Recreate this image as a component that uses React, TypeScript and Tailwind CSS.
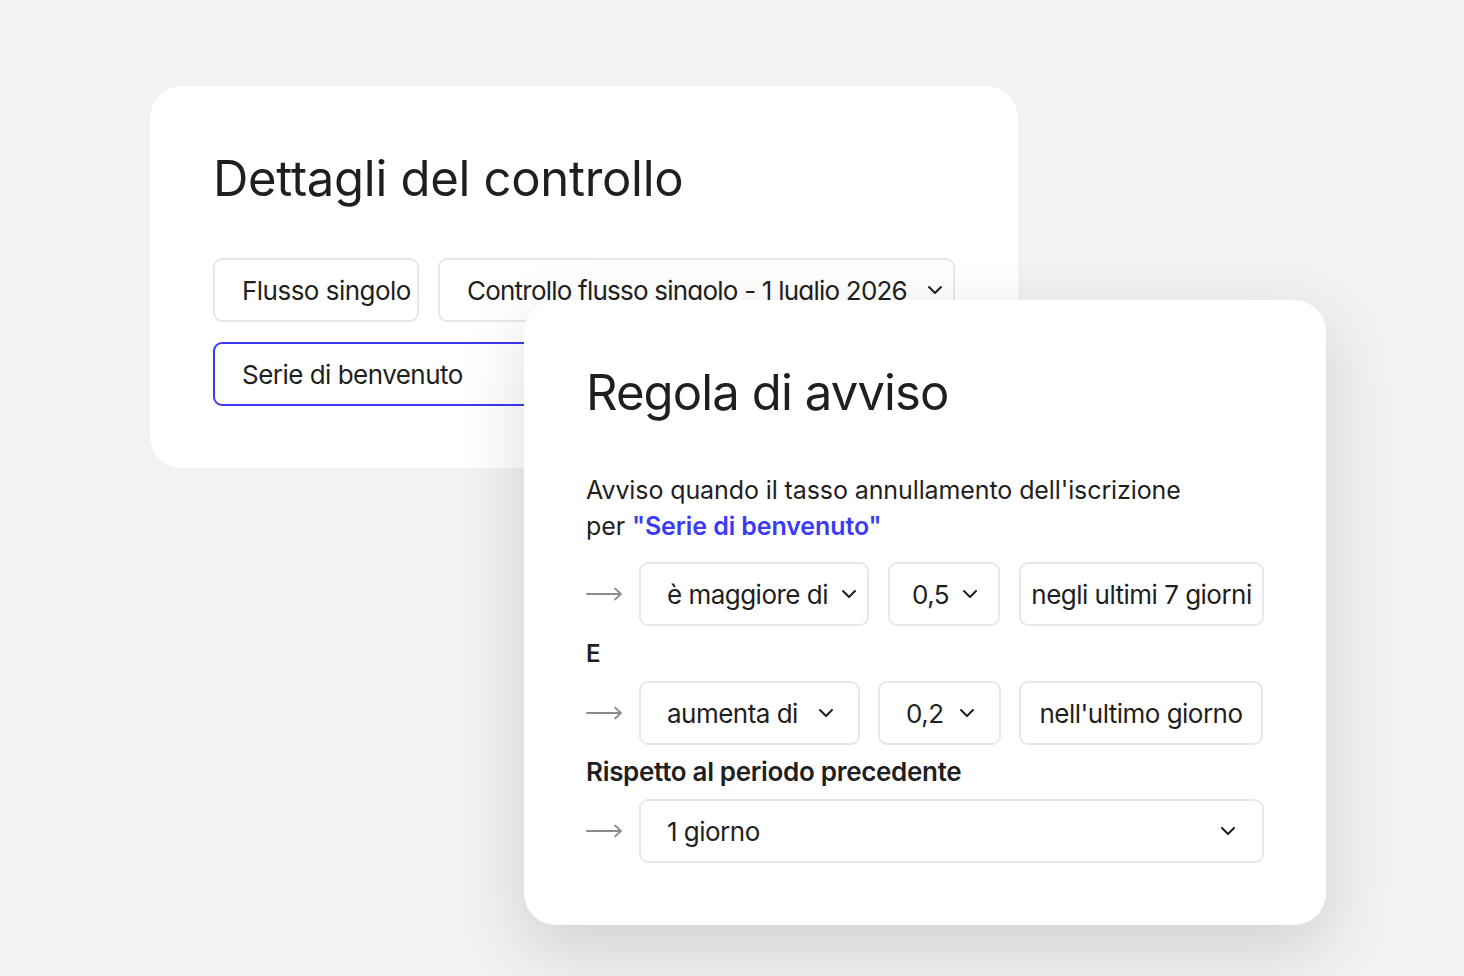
import React from 'react';

const font = { fontFamily: 'Inter, "Noto Sans", sans-serif' };

function Chevron() {
  return (
    <svg width="16" height="10" viewBox="0 0 16 10" fill="none" className="shrink-0">
      <path d="M2 2l6 6 6-6" stroke="#1f1f1f" strokeWidth="2" strokeLinecap="round" strokeLinejoin="round" />
    </svg>
  );
}

function Arrow() {
  return (
    <svg width="37" height="14" viewBox="0 0 37 14" fill="none" className="shrink-0">
      <path d="M1 7h34M29 1.5L35 7l-6 5.5" stroke="#8c8c8c" strokeWidth="1.8" strokeLinecap="round" strokeLinejoin="round" />
    </svg>
  );
}

function Box({
  children,
  className = '',
  active = false,
}: {
  children: React.ReactNode;
  className?: string;
  active?: boolean;
}) {
  return (
    <div
      className={`flex h-[64px] items-center whitespace-nowrap rounded-[9px] border-2 bg-white text-[26px] tracking-[-0.02em] text-[#1f1f1f] ${
        active ? 'border-[#3b3bf7]' : 'border-[#e8e8e8]'
      } ${className}`}
    >
      {children}
    </div>
  );
}

export default function App() {
  return (
    <div className="relative h-[976px] w-full overflow-hidden bg-[#f3f2f0]" style={font}>
      {/* Dettagli del controllo */}
      <div className="absolute left-[150px] top-[86px] w-[868px] rounded-[32px] bg-white px-[63px] pb-[62px] pt-[63px]">
        <h1 className="text-[49px] leading-[60px] tracking-[-0.006em] text-[#1f1f1f]">Dettagli del controllo</h1>
        <div className="mt-[49px] flex flex-col gap-5">
          <div className="flex gap-[19px]">
            <Box className="h-[63px] w-[206px] pl-[27px]">Flusso singolo</Box>
            <Box className="h-[63px] w-[517px] justify-between pl-[27px] pr-[10px]">
              <span className="tracking-[-0.03em]">Controllo flusso singolo - 1 luglio 2026</span>
              <Chevron />
            </Box>
          </div>
          <Box active className="h-[63px] w-full justify-between pl-[27px] pr-[18px]">
            <span>Serie di benvenuto</span>
            <Chevron />
          </Box>
        </div>
      </div>

      {/* Regola di avviso */}
      <div className="absolute left-[524px] top-[300px] w-[802px] rounded-[32px] bg-white px-[62px] pb-[62px] pt-[63px] shadow-[0_24px_70px_rgba(0,0,0,0.14)]">
        <h2 className="text-[49px] leading-[60px] tracking-[-0.018em] text-[#1f1f1f]">Regola di avviso</h2>
        <p className="mt-[49px] text-[25px] leading-[36px] tracking-[-0.004em] text-[#1f1f1f]">
          Avviso quando il tasso annullamento dell'iscrizione
          <br />
          per <span className="font-semibold text-[#3b3bf7]">"Serie di benvenuto"</span>
        </p>

        <div className="mt-[18px] flex items-center gap-[16px]">
          <Arrow />
          <div className="flex gap-[19px]">
            <Box className="w-[230px] justify-between pl-[26px] pr-[10px]">
              <span>è maggiore di</span>
              <Chevron />
            </Box>
            <Box className="w-[112px] justify-between pl-[22px] pr-[20px]">
              <span>0,5</span>
              <Chevron />
            </Box>
            <Box className="w-[245px] justify-center">negli ultimi 7 giorni</Box>
          </div>
        </div>

        <div className="mt-[10px] text-[24px] font-semibold leading-[35px] text-[#1f1f1f]">E</div>

        <div className="mt-[10px] flex items-center gap-[16px]">
          <Arrow />
          <div className="flex gap-[18px]">
            <Box className="w-[221px] justify-between pl-[26px] pr-[24px]">
              <span>aumenta di</span>
              <Chevron />
            </Box>
            <Box className="w-[123px] justify-between pl-[26px] pr-[24px]">
              <span>0,2</span>
              <Chevron />
            </Box>
            <Box className="w-[244px] justify-center">nell'ultimo giorno</Box>
          </div>
        </div>

        <div className="mt-[9px] text-[26px] font-semibold leading-[36px] tracking-[-0.012em] text-[#1f1f1f]">
          Rispetto al periodo precedente
        </div>

        <div className="mt-[9px] flex items-center gap-[16px]">
          <Arrow />
          <Box className="h-[63px] flex-1 justify-between pl-[26px] pr-[26px]">
            <span>1 giorno</span>
            <Chevron />
          </Box>
        </div>
      </div>
    </div>
  );
}
